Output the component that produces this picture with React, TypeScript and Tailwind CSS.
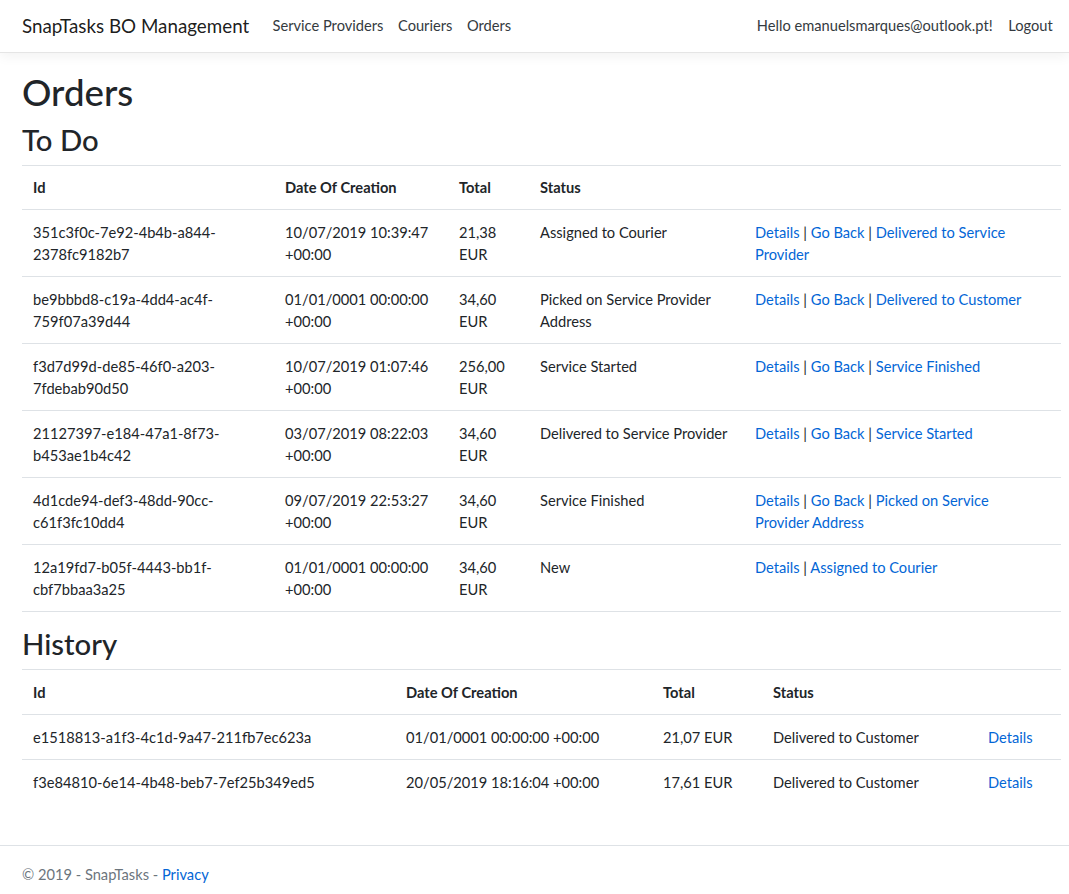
import React from 'react';

const font = { fontFamily: '"Segoe UI", Lato, "Liberation Sans", sans-serif' };

type Todo = {
  id: [string, string];
  date: [string, string];
  total: [string, string];
  status: string[];
  actions: string[][];
};

const todos: Todo[] = [
  {
    id: ['351c3f0c-7e92-4b4b-a844-', '2378fc9182b7'],
    date: ['10/07/2019 10:39:47', '+00:00'],
    total: ['21,38', 'EUR'],
    status: ['Assigned to Courier'],
    actions: [['Details', 'Go Back', 'Delivered to Service'], ['Provider']],
  },
  {
    id: ['be9bbbd8-c19a-4dd4-ac4f-', '759f07a39d44'],
    date: ['01/01/0001 00:00:00', '+00:00'],
    total: ['34,60', 'EUR'],
    status: ['Picked on Service Provider', 'Address'],
    actions: [['Details', 'Go Back', 'Delivered to Customer']],
  },
  {
    id: ['f3d7d99d-de85-46f0-a203-', '7fdebab90d50'],
    date: ['10/07/2019 01:07:46', '+00:00'],
    total: ['256,00', 'EUR'],
    status: ['Service Started'],
    actions: [['Details', 'Go Back', 'Service Finished']],
  },
  {
    id: ['21127397-e184-47a1-8f73-', 'b453ae1b4c42'],
    date: ['03/07/2019 08:22:03', '+00:00'],
    total: ['34,60', 'EUR'],
    status: ['Delivered to Service Provider'],
    actions: [['Details', 'Go Back', 'Service Started']],
  },
  {
    id: ['4d1cde94-def3-48dd-90cc-', 'c61f3fc10dd4'],
    date: ['09/07/2019 22:53:27', '+00:00'],
    total: ['34,60', 'EUR'],
    status: ['Service Finished'],
    actions: [['Details', 'Go Back', 'Picked on Service'], ['Provider Address']],
  },
  {
    id: ['12a19fd7-b05f-4443-bb1f-', 'cbf7bbaa3a25'],
    date: ['01/01/0001 00:00:00', '+00:00'],
    total: ['34,60', 'EUR'],
    status: ['New'],
    actions: [['Details', 'Assigned to Courier']],
  },
];

const history = [
  {
    id: 'e1518813-a1f3-4c1d-9a47-211fb7ec623a',
    date: '01/01/0001 00:00:00 +00:00',
    total: '21,07 EUR',
    status: 'Delivered to Customer',
  },
  {
    id: 'f3e84810-6e14-4b48-beb7-7ef25b349ed5',
    date: '20/05/2019 18:16:04 +00:00',
    total: '17,61 EUR',
    status: 'Delivered to Customer',
  },
];

const Lines = ({ lines }: { lines: string[] }) => (
  <>
    {lines.map((l, i) => (
      <div key={i} className="whitespace-nowrap">
        {l}
      </div>
    ))}
  </>
);

const Link = ({ children }: { children: React.ReactNode }) => (
  <a href="#" className="text-[#0366d6]">
    {children}
  </a>
);

const thTodo = 'text-left font-bold px-[11px] pt-[11px] pb-[10px] border-t border-[#dee2e6] align-top';
const th = 'text-left font-bold px-[11px] pt-[12px] pb-[10px] border-t border-[#dee2e6] align-top';
const td = 'px-[11px] pt-[12px] pb-[10px] border-t border-[#dee2e6] align-top';

export default function App() {
  return (
    <div className="bg-white text-[#212529] text-[14.67px] leading-[22px]" style={font}>
      <header className="h-[53px] border-b border-[#e5e5e5] shadow-[0_4px_11px_rgba(0,0,0,0.05)] flex items-center pl-[22px] pr-[9px]">
        <a href="#" className="text-[18.8px] text-black/90 mr-[16px]">
          SnapTasks BO Management
        </a>
        <nav className="flex">
          {['Service Providers', 'Couriers', 'Orders'].map((n) => (
            <a key={n} href="#" className="px-[7.3px] text-[#343a40]">
              {n}
            </a>
          ))}
        </nav>
        <div className="ml-auto flex">
          <span className="px-[7.3px] text-[#343a40]">Hello emanuelsmarques@outlook.pt!</span>
          <a href="#" className="px-[7.3px] text-[#343a40] ml-[1px]">
            Logout
          </a>
        </div>
      </header>

      <main className="pl-[22px] w-[1061px] pt-[17px]">
        <h1 className="text-[36.7px] leading-[44px] font-medium mb-[8px]">Orders</h1>
        <h2 className="text-[29.3px] leading-[35px] font-medium mb-[8px]">To Do</h2>
        <table className="w-full table-fixed border-collapse mb-[14px] border-b border-[#dee2e6]">
          <colgroup>
            <col className="w-[252px]" />
            <col className="w-[174px]" />
            <col className="w-[81px]" />
            <col className="w-[215px]" />
            <col />
          </colgroup>
          <thead>
            <tr>
              <th className={thTodo}>Id</th>
              <th className={thTodo}>Date Of Creation</th>
              <th className={thTodo}>Total</th>
              <th className={thTodo}>Status</th>
              <th className={thTodo}></th>
            </tr>
          </thead>
          <tbody>
            {todos.map((o) => (
              <tr key={o.id[0]}>
                <td className={td}>
                  <Lines lines={o.id} />
                </td>
                <td className={td}>
                  <Lines lines={o.date} />
                </td>
                <td className={td}>
                  <Lines lines={o.total} />
                </td>
                <td className={td}>
                  <Lines lines={o.status} />
                </td>
                <td className={td}>
                  {o.actions.map((line, i) => (
                    <div key={i} className="whitespace-nowrap">
                      {line.map((a, j) => (
                        <React.Fragment key={a}>
                          {j > 0 && ' | '}
                          <Link>{a}</Link>
                        </React.Fragment>
                      ))}
                    </div>
                  ))}
                </td>
              </tr>
            ))}
          </tbody>
        </table>

        <h2 className="text-[29.3px] leading-[35px] font-medium mb-[8px]">History</h2>
        <table className="w-full table-fixed border-collapse">
          <colgroup>
            <col className="w-[373px]" />
            <col className="w-[257px]" />
            <col className="w-[110px]" />
            <col className="w-[215px]" />
            <col />
          </colgroup>
          <thead>
            <tr>
              <th className={th}>Id</th>
              <th className={th}>Date Of Creation</th>
              <th className={th}>Total</th>
              <th className={th}>Status</th>
              <th className={th}></th>
            </tr>
          </thead>
          <tbody>
            {history.map((h) => (
              <tr key={h.id}>
                <td className={td + ' whitespace-nowrap'}>{h.id}</td>
                <td className={td + ' whitespace-nowrap'}>{h.date}</td>
                <td className={td + ' whitespace-nowrap'}>{h.total}</td>
                <td className={td + ' whitespace-nowrap'}>{h.status}</td>
                <td className={td}>
                  <Link>Details</Link>
                </td>
              </tr>
            ))}
          </tbody>
        </table>
      </main>

      <footer className="mt-[41px] border-t border-[#dee2e6] text-[#6c757d] pl-[22px] leading-[58px]">
        © 2019 - SnapTasks - <Link>Privacy</Link>
      </footer>
    </div>
  );
}
